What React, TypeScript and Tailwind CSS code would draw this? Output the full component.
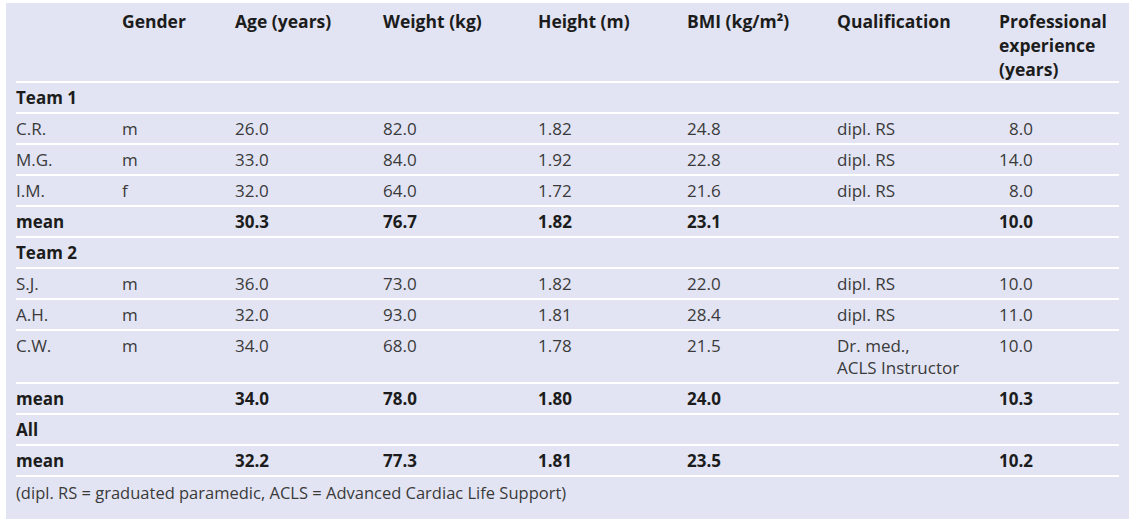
import React from "react";

type Row = {
  kind: "group" | "data" | "mean";
  cells: string[];
};

const cols = "grid grid-cols-[106px_113px_148px_155px_149px_150px_162px_120px]";

const rows: Row[] = [
  { kind: "group", cells: ["Team 1"] },
  { kind: "data", cells: ["C.R.", "m", "26.0", "82.0", "1.82", "24.8", "dipl. RS", "8.0"] },
  { kind: "data", cells: ["M.G.", "m", "33.0", "84.0", "1.92", "22.8", "dipl. RS", "14.0"] },
  { kind: "data", cells: ["I.M.", "f", "32.0", "64.0", "1.72", "21.6", "dipl. RS", "8.0"] },
  { kind: "mean", cells: ["mean", "", "30.3", "76.7", "1.82", "23.1", "", "10.0"] },
  { kind: "group", cells: ["Team 2"] },
  { kind: "data", cells: ["S.J.", "m", "36.0", "73.0", "1.82", "22.0", "dipl. RS", "10.0"] },
  { kind: "data", cells: ["A.H.", "m", "32.0", "93.0", "1.81", "28.4", "dipl. RS", "11.0"] },
  { kind: "data", cells: ["C.W.", "m", "34.0", "68.0", "1.78", "21.5", "Dr. med.,\nACLS Instructor", "10.0"] },
  { kind: "mean", cells: ["mean", "", "34.0", "78.0", "1.80", "24.0", "", "10.3"] },
  { kind: "group", cells: ["All"] },
  { kind: "mean", cells: ["mean", "", "32.2", "77.3", "1.81", "23.5", "", "10.2"] },
];

const headers = [
  "",
  "Gender",
  "Age (years)",
  "Weight (kg)",
  "Height (m)",
  "BMI (kg/m²)",
  "Qualification",
  "Professional experience (years)",
];

export default function App() {
  return (
    <div className="w-[1134px] h-[523px] bg-white pt-[3px] pl-[6px] font-['Open_Sans',sans-serif]">
      <div className="w-[1123px] h-[516px] bg-[#e2e4f3] px-[10px] text-[17px]">
        {/* Header */}
        <div className={`${cols} border-b-2 border-white pt-[6px] text-[17.5px] font-bold leading-[24px] text-[#1c1c1c]`}>
          {headers.map((h, i) => (
            <div key={i} className={i === 7 ? "w-[100px]" : ""}>
              {h}
            </div>
          ))}
        </div>

        {rows.map((r, idx) => (
          <div
            key={idx}
            className={`${cols} border-b-2 border-white pt-[4px] pb-[3px] leading-[22px] ${
              r.kind === "data" ? "text-[#3a3a3a]" : "font-bold text-[#1c1c1c]"
            }`}
          >
            {r.kind === "group" ? (
              <div className="col-span-8">{r.cells[0]}</div>
            ) : (
              r.cells.map((c, i) => (
                <div
                  key={i}
                  className={`whitespace-pre-line ${i === 7 && c.length === 3 ? "pl-[10px]" : ""}`}
                >
                  {c}
                </div>
              ))
            )}
          </div>
        ))}

        <div className="pt-[5px] text-[16.5px] leading-[22px] text-[#3a3a3a]">
          (dipl. RS = graduated paramedic, ACLS = Advanced Cardiac Life Support)
        </div>
      </div>
    </div>
  );
}
